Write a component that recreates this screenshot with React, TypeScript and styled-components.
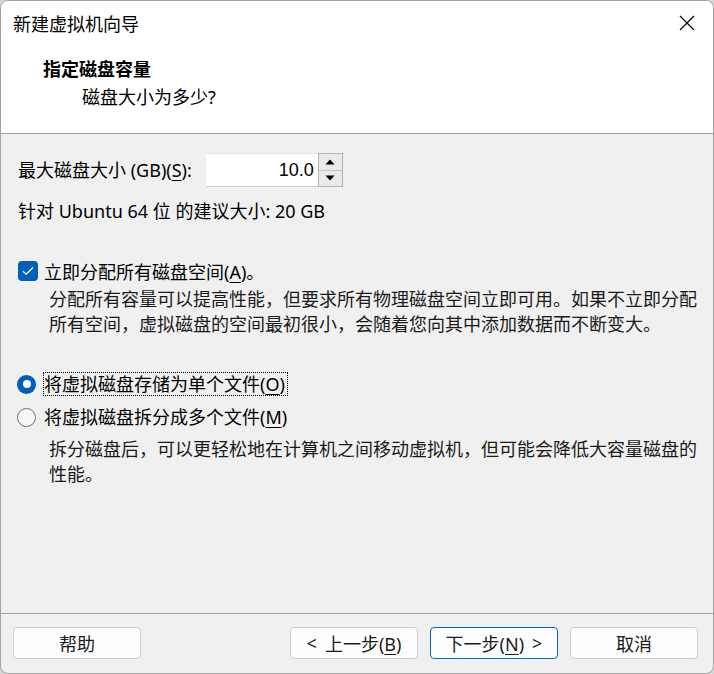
import React from "react";
import styled, { createGlobalStyle } from "styled-components";

const GlobalStyle = createGlobalStyle`
  html, body {
    margin: 0;
    padding: 0;
    background: #d6d6d6;
  }
  body {
    font-family: "Noto Sans", "Noto Sans CJK SC", sans-serif;
    color: #000;
  }
  * {
    box-sizing: border-box;
  }
`;

const Window = styled.div`
  width: 714px;
  height: 674px;
  border: 1px solid #a2a2a2;
  border-radius: 8px;
  overflow: hidden;
  display: flex;
  flex-direction: column;
  background: #f0f0f0;
`;

const TitleBar = styled.div`
  height: 44px;
  flex-shrink: 0;
  background: #fff;
  display: flex;
  align-items: center;
  justify-content: space-between;
  padding: 0 18px 0 12px;
  font-size: 18px;
`;

const CloseButton = styled.div`
  width: 16px;
  height: 16px;
  display: flex;
`;

const Header = styled.div`
  height: 89px;
  flex-shrink: 0;
  background: #fff;
  border-bottom: 1px solid #a0a0a0;
  padding: 11px 0 0 42px;
  display: flex;
  flex-direction: column;
`;

const HeaderTitle = styled.div`
  font-size: 18px;
  font-weight: 700;
  line-height: 26px;
`;

const HeaderSub = styled.div`
  font-size: 18px;
  line-height: 30px;
  padding-left: 39px;
`;

const Body = styled.div`
  flex: 1;
  padding: 19px 0 0 17px;
  display: flex;
  flex-direction: column;
`;

const SizeRow = styled.div`
  display: flex;
  align-items: center;
  height: 34px;
`;

const Label = styled.span`
  font-size: 18px;
  line-height: 24px;
  margin-right: 14px;
  white-space: nowrap;
`;

const Key = styled.span`
  text-decoration: underline;
  text-underline-offset: 3px;
`;

const SpinBox = styled.div`
  display: flex;
  height: 34px;
`;

const SpinInput = styled.div`
  width: 112px;
  height: 34px;
  background: #fff;
  border-top: 1px solid #e6e6e6;
  border-bottom: 1px solid #cfcfcf;
  font-size: 18px;
  line-height: 32px;
  text-align: right;
  padding-right: 4px;
  font-family: "Liberation Sans", "Noto Sans", sans-serif;
`;

const SpinButtons = styled.div`
  width: 25px;
  height: 34px;
  border: 1px solid #b4b4b4;
  display: flex;
  flex-direction: column;
`;

const SpinButton = styled.div<{ $top?: boolean }>`
  flex: 1;
  background: #eaeaea;
  display: flex;
  align-items: center;
  justify-content: center;
  border-bottom: ${(p) => (p.$top ? "1px solid #c4c4c4" : "none")};
`;

const Line = styled.div<{ $mt: number }>`
  font-size: 18px;
  line-height: 24px;
  margin-top: ${(p) => p.$mt}px;
  white-space: nowrap;
`;

const OptionRow = styled.label<{ $mt: number }>`
  display: flex;
  align-items: center;
  height: 24px;
  margin-top: ${(p) => p.$mt}px;
  font-size: 18px;
  white-space: nowrap;
`;

const CheckBox = styled.span`
  width: 20px;
  height: 20px;
  border-radius: 4px;
  background: #005fb8;
  display: flex;
  align-items: center;
  justify-content: center;
  margin-right: 6px;
`;

const Radio = styled.span<{ $checked?: boolean }>`
  width: 19px;
  height: 19px;
  border-radius: 50%;
  margin-left: -1px;
  margin-right: 7px;
  display: flex;
  align-items: center;
  justify-content: center;
  background: ${(p) => (p.$checked ? "#005fb8" : "#f7f7f7")};
  border: ${(p) => (p.$checked ? "none" : "1px solid #6e6e6e")};

  &::after {
    content: "";
    display: ${(p) => (p.$checked ? "block" : "none")};
    width: 8px;
    height: 8px;
    border-radius: 50%;
    background: #fff;
  }
`;

const OptionText = styled.span<{ $focused?: boolean }>`
  line-height: 22px;
  padding: 0 2px 0 0;
  border: 1px dotted ${(p) => (p.$focused ? "#000" : "transparent")};
`;

const Description = styled.div<{ $mt: number }>`
  font-size: 18px;
  line-height: 25px;
  margin-top: ${(p) => p.$mt}px;
  padding-left: 31px;
  color: #1a1a1a;
  width: 690px;
`;

const Footer = styled.div`
  flex-shrink: 0;
  border-top: 1px solid #a0a0a0;
  padding: 13px 15px 14px 12px;
  display: flex;
  align-items: center;
`;

const ButtonGroup = styled.div`
  margin-left: auto;
  display: flex;
  gap: 12px;
`;

const Button = styled.button<{ $default?: boolean }>`
  width: 128px;
  height: 32px;
  border-radius: 4px;
  background: #fdfdfd;
  border: 1px solid ${(p) => (p.$default ? "#0067c0" : "#d0d0d0")};
  font-family: "Noto Sans", "Noto Sans CJK SC", sans-serif;
  font-size: 18px;
  color: #1b1b1b;
  padding: 0;
  display: flex;
  align-items: center;
  justify-content: center;
  gap: 8px;
`;

function Triangle({ up }: { up?: boolean }) {
  return (
    <svg width="10" height="6" viewBox="0 0 10 6">
      <polygon points={up ? "5,0.5 9.5,5.5 0.5,5.5" : "0.5,0.5 9.5,0.5 5,5.5"} fill="#000" />
    </svg>
  );
}

export default function App() {
  return (
    <>
      <GlobalStyle />
      <Window>
        <TitleBar>
          <span>新建虚拟机向导</span>
          <CloseButton>
            <svg width="16" height="16" viewBox="0 0 16 16">
              <path d="M1 1 L15 15 M15 1 L1 15" stroke="#000" strokeWidth="1.2" />
            </svg>
          </CloseButton>
        </TitleBar>

        <Header>
          <HeaderTitle>指定磁盘容量</HeaderTitle>
          <HeaderSub>磁盘大小为多少?</HeaderSub>
        </Header>

        <Body>
          <SizeRow>
            <Label>
              最大磁盘大小 (GB)(<Key>S</Key>):
            </Label>
            <SpinBox>
              <SpinInput>10.0</SpinInput>
              <SpinButtons>
                <SpinButton $top>
                  <Triangle up />
                </SpinButton>
                <SpinButton>
                  <Triangle />
                </SpinButton>
              </SpinButtons>
            </SpinBox>
          </SizeRow>

          <Line $mt={12}>针对 Ubuntu 64 位 的建议大小: 20 GB</Line>

          <OptionRow $mt={36}>
            <CheckBox>
              <svg width="12" height="10" viewBox="0 0 12 10">
                <path d="M1 5.2 L4.2 8.2 L11 1.5" stroke="#fff" strokeWidth="1.3" fill="none" />
              </svg>
            </CheckBox>
            <span>
              立即分配所有磁盘空间(<Key>A</Key>)。
            </span>
          </OptionRow>
          <Description $mt={4}>
            分配所有容量可以提高性能，但要求所有物理磁盘空间立即可用。如果不立即分配所有空间，虚拟磁盘的空间最初很小，会随着您向其中添加数据而不断变大。
          </Description>

          <OptionRow $mt={35}>
            <Radio $checked />
            <OptionText $focused>
              将虚拟磁盘存储为单个文件(<Key>O</Key>)
            </OptionText>
          </OptionRow>
          <OptionRow $mt={9}>
            <Radio />
            <OptionText>
              将虚拟磁盘拆分成多个文件(<Key>M</Key>)
            </OptionText>
          </OptionRow>
          <Description $mt={8}>
            拆分磁盘后，可以更轻松地在计算机之间移动虚拟机，但可能会降低大容量磁盘的性能。
          </Description>
        </Body>

        <Footer>
          <Button>帮助</Button>
          <ButtonGroup>
            <Button>
              <span>&lt;</span>
              <span>
                上一步(<Key>B</Key>)
              </span>
            </Button>
            <Button $default>
              <span>
                下一步(<Key>N</Key>)
              </span>
              <span>&gt;</span>
            </Button>
            <Button>取消</Button>
          </ButtonGroup>
        </Footer>
      </Window>
    </>
  );
}
